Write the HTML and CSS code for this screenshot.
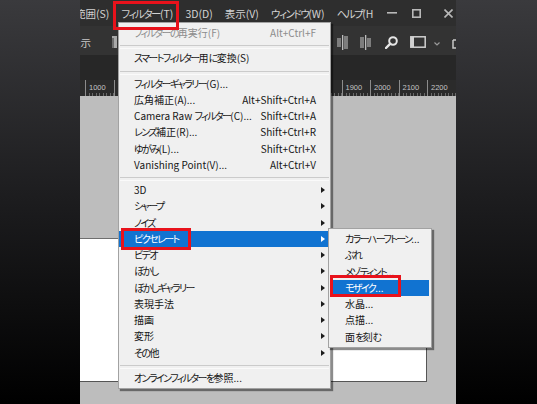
FILE: index.html
```html
<!DOCTYPE html>
<html lang="ja">
<head>
<meta charset="utf-8">
<title>Photoshop フィルターメニュー</title>
<link rel="stylesheet" href="styles.css">
</head>
<body>
<div class="stage">
  <div class="app">
    <div class="menubar">
      <span class="mb-item first">範囲(S)</span>
      <span class="mb-item active"><span class="k">フィルター</span>(T)</span>
      <span class="mb-item">3D(D)</span>
      <span class="mb-item">表示(V)</span>
      <span class="mb-item"><span class="k">ウィンドウ</span>(W)</span>
      <span class="mb-item"><span class="k">ヘルプ</span>(H</span>
      <div class="winctl">
        <svg class="wc wc-min" width="10" height="10" viewBox="0 0 10 10"><rect x="0" y="4" width="10" height="1.6" fill="#b8b8b8"/></svg>
        <svg class="wc wc-max" width="9" height="9" viewBox="0 0 9 9"><rect x="0.8" y="0.8" width="7.4" height="7.4" fill="none" stroke="#b8b8b8" stroke-width="1.6"/></svg>
        <svg class="wc wc-close" width="9" height="9" viewBox="0 0 9 9"><path d="M0.5 0.5L8.5 8.5M8.5 0.5L0.5 8.5" stroke="#b8b8b8" stroke-width="1.6"/></svg>
      </div>
    </div>

    <div class="toolbar">
      <span class="tb-text">表示</span>
      <svg class="tb-t" width="5" height="12" viewBox="0 0 5 12"><rect x="0" y="0" width="5" height="12" fill="#a9a9a9"/><rect x="0" y="2" width="2" height="10" fill="#6e6e6e"/></svg>
      <div class="tb-right">
        <svg class="ic ic-a" width="12" height="15" viewBox="0 0 12 15"><rect x="0" y="3" width="4" height="9" fill="#7d7d7d"/><rect x="7" y="1" width="4" height="13" fill="#7d7d7d"/><rect x="5" y="0" width="1.3" height="15" fill="#bdbdbd"/></svg>
        <svg class="ic ic-b" width="12" height="15" viewBox="0 0 12 15"><rect x="0" y="2" width="4" height="11" fill="#7d7d7d"/><rect x="7" y="3" width="4" height="9" fill="#7d7d7d"/><rect x="5" y="0" width="1.3" height="15" fill="#bdbdbd"/></svg>
        <svg class="ic ic-zoom" width="13" height="13" viewBox="0 0 13 13"><circle cx="8" cy="5" r="3.8" fill="none" stroke="#e6e6e6" stroke-width="2"/><path d="M5.3 7.7L1 12" stroke="#e6e6e6" stroke-width="2.4" stroke-linecap="round"/></svg>
        <svg class="ic ic-frame" width="16" height="12" viewBox="0 0 16 12"><rect x="0.8" y="0.8" width="14.4" height="10.4" fill="none" stroke="#d0d0d0" stroke-width="1.5"/><rect x="1" y="1" width="3" height="10" fill="#d0d0d0"/></svg>
        <svg class="ic ic-chev" width="6" height="4" viewBox="0 0 6 4"><path d="M0.5 0.5L3 3L5.5 0.5" fill="none" stroke="#9a9a9a" stroke-width="1.2"/></svg>
        <svg class="ic ic-last" width="12" height="13" viewBox="0 0 12 13"><path d="M1 4V12H11V6" fill="none" stroke="#c8c8c8" stroke-width="1.5"/><path d="M1 4H5" stroke="#c8c8c8" stroke-width="1.5"/><path d="M7 1H11V5" fill="none" stroke="#c8c8c8" stroke-width="1.3"/></svg>
      </div>
    </div>

    <div class="band"></div>

    <div class="ruler">
      <span class="rc">1000</span><span class="rc"></span><span class="rc"></span><span class="rc"></span><span class="rc"></span><span class="rc"></span><span class="rc"></span><span class="rc"></span><span class="rc"></span><span class="rc">1900</span><span class="rc">2000</span><span class="rc">2100</span><span class="rc">2200</span>
    </div>

    <div class="workspace">
      <div class="canvas"></div>
    </div>

    <div class="menu main-menu">
      <div class="mi disabled"><span class="lb"><span class="k">フィルターの</span>再実行(F)</span><span class="sc">Alt+Ctrl+F</span></div>
      <div class="sep"></div>
      <div class="mi"><span class="lb"><span class="k">スマートフィルター</span>用<span class="k">に</span>変換(S)</span></div>
      <div class="sep"></div>
      <div class="mi"><span class="lb"><span class="k">フィルターギャラリー</span>(G)...</span></div>
      <div class="mi"><span class="lb">広角補正(A)...</span><span class="sc">Alt+Shift+Ctrl+A</span></div>
      <div class="mi"><span class="lb">Camera Raw <span class="k">フィルター</span>(C)...</span><span class="sc">Shift+Ctrl+A</span></div>
      <div class="mi"><span class="lb"><span class="k">レンズ</span>補正(R)...</span><span class="sc">Shift+Ctrl+R</span></div>
      <div class="mi"><span class="lb"><span class="k">ゆがみ</span>(L)...</span><span class="sc">Shift+Ctrl+X</span></div>
      <div class="mi"><span class="lb">Vanishing Point(V)...</span><span class="sc">Alt+Ctrl+V</span></div>
      <div class="sep"></div>
      <div class="mi"><span class="lb">3D</span><span class="sc"></span><span class="ar"></span></div>
      <div class="mi"><span class="lb"><span class="k">シャープ</span></span><span class="sc"></span><span class="ar"></span></div>
      <div class="mi"><span class="lb"><span class="k">ノイズ</span></span><span class="sc"></span><span class="ar"></span></div>
      <div class="mi hl"><span class="lb"><span class="k">ピクセレート</span></span><span class="sc"></span><span class="ar"></span><span class="mark mark-pix"></span></div>
      <div class="mi"><span class="lb"><span class="k">ビデオ</span></span><span class="sc"></span><span class="ar"></span></div>
      <div class="mi"><span class="lb"><span class="k">ぼかし</span></span><span class="sc"></span><span class="ar"></span></div>
      <div class="mi"><span class="lb"><span class="k">ぼかしギャラリー</span></span><span class="sc"></span><span class="ar"></span></div>
      <div class="mi"><span class="lb">表現手法</span><span class="sc"></span><span class="ar"></span></div>
      <div class="mi"><span class="lb">描画</span><span class="sc"></span><span class="ar"></span></div>
      <div class="mi"><span class="lb">変形</span><span class="sc"></span><span class="ar"></span></div>
      <div class="mi"><span class="lb"><span class="k">その</span>他</span><span class="sc"></span><span class="ar"></span></div>
      <div class="sep"></div>
      <div class="mi"><span class="lb"><span class="k">オンラインフィルターを</span>参照...</span></div>
    </div>

    <div class="menu sub-menu">
      <div class="mi"><span class="lb"><span class="k">カラーハーフトーン</span>...</span></div>
      <div class="mi"><span class="lb"><span class="k">ぶれ</span></span></div>
      <div class="mi"><span class="lb"><span class="k">メゾティント</span>...</span></div>
      <div class="mi hl"><span class="lb"><span class="k">モザイク</span>...</span><span class="mark mark-mos"></span></div>
      <div class="mi"><span class="lb">水晶...</span></div>
      <div class="mi"><span class="lb">点描...</span></div>
      <div class="mi"><span class="lb">面<span class="k">を</span>刻む</span></div>
    </div>
  </div>
</div>
</body>
</html>
```

FILE: styles.css
```css
* { box-sizing: border-box; }

html, body {
  margin: 0;
  padding: 0;
}

body {
  width: 537px;
  height: 404px;
  overflow: hidden;
  font-family: "Noto Sans CJK JP", "Noto Sans", sans-serif;
  font-feature-settings: "palt";
}

.stage {
  width: 537px;
  height: 404px;
  padding-left: 80px;
  background: linear-gradient(180deg, #3a3a3d 0%, #1c1c1e 50%, #000 100%);
}

.app {
  position: relative;
  width: 376px;
  height: 404px;
  overflow: hidden;
  display: flex;
  flex-direction: column;
  background: #bdbdbd;
}

/* narrow kana, like Meiryo UI */
.k { letter-spacing: -0.16em; }

/* menubar */
.menubar {
  height: 26px;
  flex: none;
  display: flex;
  align-items: center;
  background: #2e2e2e;
  color: #d2d2d2;
  font-size: 10.5px;
  white-space: nowrap;
}

.menubar .k { letter-spacing: -0.14em; }

.mb-item {
  position: relative;
  flex: none;
  padding: 0 6px;
  line-height: 25px;
}

.mb-item.first { margin-left: -11px; }

.mb-item.active::after {
  content: "";
  position: absolute;
  left: -2px;
  right: 0;
  top: 0;
  height: 23px;
  border: 3px solid #e8121b;
  z-index: 5;
}

.winctl {
  margin-left: auto;
  margin-right: 3px;
  display: flex;
  align-items: center;
  background: #2e2e2e;
}

.wc { flex: none; display: block; }
.wc-max { margin-left: 15px; }
.wc-close { margin-left: 23px; }

/* toolbar */
.toolbar {
  height: 29px;
  flex: none;
  display: flex;
  align-items: center;
  padding-top: 3px;
  background: #333333;
  color: #c8c8c8;
  font-size: 10.5px;
  white-space: nowrap;
}

.tb-text { margin-left: -10px; }

.tb-t { margin-left: 21px; flex: none; }

.tb-right {
  margin-left: auto;
  margin-right: -8px;
  display: flex;
  align-items: center;
}

.ic { flex: none; display: block; }
.ic-b { margin-left: 11px; }
.ic-zoom { margin-left: 13px; }
.ic-frame { margin-left: 12px; }
.ic-chev { margin-left: 8px; margin-top: 3px; }
.ic-last { margin-left: 12px; }

.band {
  height: 25px;
  flex: none;
  background: #272727;
}

/* ruler */
.ruler {
  height: 16px;
  flex: none;
  display: flex;
  padding-left: 5px;
  background: #2b2b2b;
  white-space: nowrap;
}

.rc {
  flex: none;
  width: 28.5px;
  height: 16px;
  border-left: 1px solid #8c8c8c;
  padding: 3px 0 0 3px;
  font-family: "Liberation Sans", sans-serif;
  font-size: 7.5px;
  line-height: 10px;
  color: #c4c4c4;
  background:
    repeating-linear-gradient(90deg, transparent 0 2.56px, #6a6a6a 2.56px 3.56px) left bottom / 100% 3px no-repeat,
    #2b2b2b;
}

/* workspace */
.workspace {
  flex: 1;
  background: #bdbdbd;
  padding-top: 142px;
}

.canvas {
  width: 347px;
  height: 144px;
  background: #fff;
  border-top: 1px solid #6e6e6e;
  border-right: 1px solid #555;
  border-bottom: 1px solid #555;
}

/* menus */
.menu {
  position: absolute;
  background: #f0f0f0;
  border: 1px solid #a2a2a2;
  box-shadow: 2px 2px 1px rgba(0, 0, 0, 0.45);
  color: #161616;
  font-size: 10px;
  white-space: nowrap;
  z-index: 2;
}

.main-menu {
  left: 38px;
  top: 22px;
  width: 213px;
  padding: 2px 0;
}

.sub-menu {
  left: 248px;
  top: 228px;
  width: 104px;
  padding: 2px 2px 2px 3px;
  z-index: 3;
}

.mi {
  position: relative;
  height: 16.25px;
  display: grid;
  grid-template-columns: 1fr auto 14px;
  align-items: center;
  padding-left: 15px;
  line-height: 16px;
}

.sub-menu .mi {
  grid-template-columns: 1fr;
  padding-left: 13px;
}

.mi.disabled { color: #8c8c8c; }

.mi.hl {
  background: #1173d1;
  color: #fff;
}

.sc { text-align: right; }

.ar {
  justify-self: center;
  width: 0;
  height: 0;
  border-left: 4px solid #1c1c1c;
  border-top: 3.5px solid transparent;
  border-bottom: 3.5px solid transparent;
}

.mi.hl .ar { border-left-color: #fff; }

.sep {
  height: 9px;
  position: relative;
}

.sep::after {
  content: "";
  position: absolute;
  left: 1px;
  right: 1px;
  top: 4px;
  height: 2px;
  border-top: 1px solid #cbcbcb;
  border-bottom: 1px solid #fafafa;
}

.mark {
  position: absolute;
  border: 3px solid #e8121b;
  z-index: 4;
}

.mark-pix {
  left: 2px;
  top: -3.25px;
  width: 70px;
  height: 22px;
}

.mark-mos {
  left: -2px;
  top: -4.75px;
  width: 71px;
  height: 22px;
}
```
